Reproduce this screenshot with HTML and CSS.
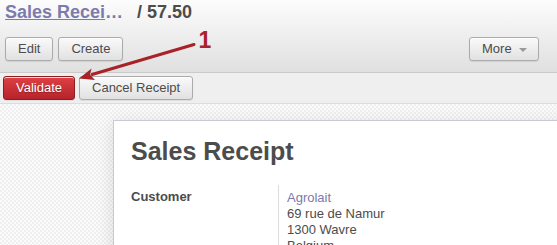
FILE: index.html
```html
<!DOCTYPE html>
<html>
<head>
<meta charset="utf-8">
<link rel="stylesheet" href="styles.css">
</head>
<body>
<div class="page">
  <div class="header">
    <div class="title"><a class="crumb">Sales Recei</a><span class="ell">…</span><span class="sep">/ 57.50</span></div>
    <div class="toolbar">
      <div class="group">
        <button class="btn">Edit</button>
        <button class="btn">Create</button>
      </div>
      <button class="btn more">More <span class="caret"></span></button>
    </div>
  </div>
  <div class="statusbar">
    <button class="btn primary">Validate</button>
    <button class="btn">Cancel Receipt</button>
  </div>
  <div class="canvas">
    <div class="sheet">
      <h1 class="heading">Sales Receipt</h1>
      <div class="row">
        <div class="label">Customer</div>
        <div class="value">
          <a class="link">Agrolait</a>
          <div>69 rue de Namur</div>
          <div>1300 Wavre</div>
          <div>Belgium</div>
        </div>
      </div>
    </div>
  </div>
  <svg class="annot" width="557" height="245" viewBox="0 0 557 245">
    <line x1="194" y1="44.5" x2="92" y2="74.5" stroke="#a82227" stroke-width="3" stroke-linecap="round"/>
    <polygon points="79,78.5 91.5,68.5 90,74.8 95,80" fill="#a82227"/>
    <text x="198.5" y="47.5" class="num">1</text>
  </svg>
</div>
</body>
</html>
```

FILE: styles.css
```css
html, body {
  margin: 0;
  padding: 0;
}
body {
  font-family: "Liberation Sans", Arial, sans-serif;
  font-size: 13px;
  color: #4c4c4c;
  width: 557px;
  height: 245px;
  overflow: hidden;
}
.page {
  position: relative;
  width: 557px;
  height: 245px;
  overflow: hidden;
}
.header {
  background: linear-gradient(#fcfcfc, #e0e0e0);
  padding: 1px 18px 11px 5px;
  border-bottom: 1px solid #cacaca;
}
.title {
  font-size: 18px;
  font-weight: bold;
  line-height: 22px;
  white-space: nowrap;
}
.crumb {
  color: #7c7bad;
  text-decoration: underline;
}
.ell {
  color: #7c7bad;
}
.sep {
  margin-left: 14px;
  color: #4c4c4c;
}
.toolbar {
  margin-top: 14px;
  display: flex;
  justify-content: space-between;
  align-items: center;
}
.group {
  display: flex;
  gap: 5px;
}
.btn {
  font-family: "Liberation Sans", Arial, sans-serif;
  font-size: 13px;
  color: #4c4c4c;
  height: 24px;
  padding: 0 12px;
  margin: 0;
  border: 1px solid #ababab;
  border-radius: 3px;
  background: linear-gradient(#fafafa, #e1e1e1);
  box-shadow: inset 0 1px 0 rgba(255,255,255,0.8), 0 1px 1px rgba(0,0,0,0.08);
  line-height: 22px;
  display: inline-flex;
  align-items: center;
}
.more {
  width: 70px;
  padding: 0 0 0 12px;
}
.caret {
  display: inline-block;
  width: 0;
  height: 0;
  border-left: 4px solid transparent;
  border-right: 4px solid transparent;
  border-top: 4px solid #9a9a9a;
  margin-left: 7px;
  margin-top: 1px;
}
.statusbar {
  background: #efefef;
  padding: 3px;
  display: flex;
  gap: 4px;
  border-bottom: 1px solid #dcdcdc;
}
.primary {
  color: #ffffff;
  border-color: #8e1d1f;
  background: linear-gradient(#de4045, #b5242a);
  text-shadow: 0 1px 1px rgba(0,0,0,0.25);
}
.canvas {
  background-color: #f7f7f7;
  background-image: repeating-conic-gradient(#efefef 0 25%, #fbfbfb 0 50%);
  background-size: 4px 4px;
  padding: 16px 0 0 113px;
  height: 200px;
}
.sheet {
  width: 620px;
  height: 200px;
  background: #ffffff;
  border: 1px solid #c9c8d8;
  box-shadow: 0 4px 18px rgba(0,0,0,0.12);
  padding: 15px 0 0 17px;
  box-sizing: border-box;
}
.heading {
  margin: 0;
  font-size: 25px;
  line-height: 30px;
  font-weight: bold;
  color: #4c4c4c;
}
.row {
  display: flex;
  align-items: flex-start;
  margin-top: 19px;
}
.label {
  width: 147px;
  font-weight: bold;
  line-height: 16px;
  padding-top: 4px;
}
.value {
  border-left: 1px solid #dcdcdc;
  padding: 5px 0 20px 8px;
  line-height: 16px;
}
.link {
  display: block;
  color: #7c7bad;
}
.annot {
  position: absolute;
  left: 0;
  top: 0;
  pointer-events: none;
}
.num {
  font-family: "Liberation Sans", Arial, sans-serif;
  font-size: 23px;
  font-weight: bold;
  fill: #a8232a;
}
```
